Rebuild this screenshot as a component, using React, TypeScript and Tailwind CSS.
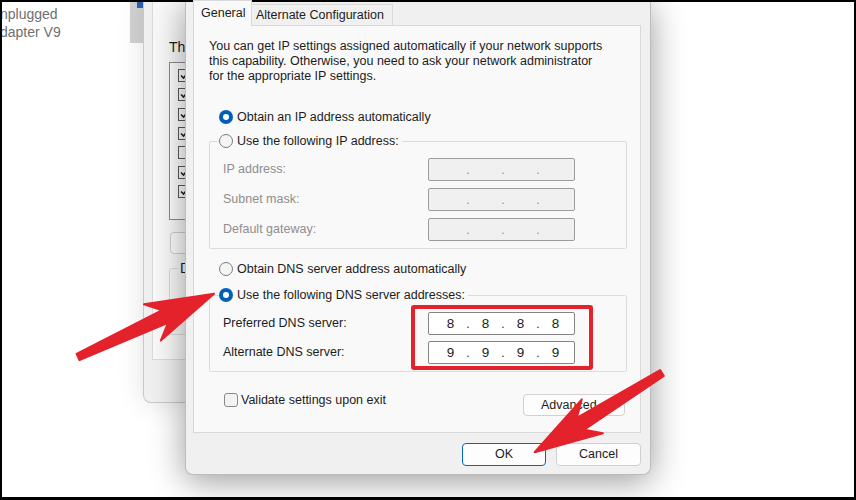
import { Fragment } from "react";

const RED = "#e4222b";

function Radio({ checked }: { checked?: boolean }) {
    if (checked) {
        return (
            <span className="flex h-[14px] w-[14px] shrink-0 items-center justify-center rounded-full bg-[#005fb8]">
                <span className="h-[6px] w-[6px] rounded-full bg-white" />
            </span>
        );
    }
    return <span className="h-[14px] w-[14px] shrink-0 rounded-full border border-[#7c7c7c] bg-[#f5f5f5]" />;
}

function IpBox({ parts, disabled }: { parts?: string[]; disabled?: boolean }) {
    const cells = parts ?? ["", "", "", ""];
    return (
        <div
            className={
                disabled
                    ? "flex h-[23px] w-[147px] items-center rounded-[2px] border border-[#9c9c9c] bg-[#f0f0f0] pl-[8px] text-[#8a8a8a]"
                    : "flex h-[23px] w-[147px] items-center rounded-[2px] border border-[#858585] bg-white pl-[8px] text-[#1c1c1c]"
            }
        >
            {cells.map((p, i) => (
                <Fragment key={i}>
                    <span className="w-[27px] text-center text-[13.5px] leading-[16px]">{p}</span>
                    {i < 3 && <span className="w-[8px] text-center text-[12px] leading-[16px]">.</span>}
                </Fragment>
            ))}
        </div>
    );
}

function Arrow({ x, y, angle, len }: { x: number; y: number; angle: number; len: number }) {
    const d = `M0,-3.5 L${len - 54},-7 L${len - 68},-20 L${len},0 L${len - 68},20 L${len - 54},7 L0,3.5 Z`;
    return (
        <path
            d={d}
            transform={`translate(${x} ${y}) rotate(${angle})`}
            fill={RED}
            stroke={RED}
            strokeWidth={2}
            strokeLinejoin="round"
        />
    );
}

function Check() {
    return (
        <span className="flex h-[13px] w-[13px] items-center justify-center border border-[#5a5a5a] bg-white">
            <svg width="9" height="9" viewBox="0 0 9 9">
                <path d="M1 4.5 L3.5 7 L8 1.5" fill="none" stroke="#222" strokeWidth="1.6" />
            </svg>
        </span>
    );
}

export default function App() {
    const checks = [true, true, true, true, false, true, true];

    return (
        <div className="relative h-[500px] w-[856px] overflow-hidden bg-white font-['Liberation_Sans',Arial,sans-serif] text-[12.5px] text-[#1c1c1c]">
            {/* network connections list behind */}
            <div className="absolute left-0 top-[5px] flex flex-col text-[14px] leading-[18px] text-[#6f6f6f]">
                <span>nplugged</span>
                <span>dapter V9</span>
            </div>
            <div className="absolute left-[130px] top-0 h-[43px] w-[14px] bg-[#d2d2d2]">
                <div className="ml-[7px] h-[8px] w-[6px] bg-[#2a62b8]" />
            </div>

            {/* adapter properties window, mostly hidden behind the dialog */}
            <div className="absolute left-[143px] top-0 flex h-[403px] w-[46px] flex-col overflow-hidden rounded-bl-[8px] border-l border-b border-[#c8c8c8] bg-[#f0f0f0] pl-[8px] shadow-[0_0_28px_rgba(0,0,0,0.12)]">
                <div className="flex h-[360px] w-[220px] flex-col border-x border-b border-[#dadada] bg-[#f9f9f9] pl-[16px] pt-[38px]">
                    <span className="whitespace-nowrap text-[14px] leading-[18px]">Th</span>
                    <div className="mt-[6px] flex h-[158px] w-[180px] flex-col border border-[#8c8c8c] bg-white pl-[8px] pt-[3px]">
                        {checks.map((c, i) => (
                            <div key={i} className="flex h-[19.3px] items-center">
                                {c ? <Check /> : <span className="h-[13px] w-[13px] border border-[#5a5a5a] bg-white" />}
                            </div>
                        ))}
                    </div>
                    <div className="ml-[1px] mt-[12px] h-[22px] w-[100px] rounded-[4px] border border-[#cfcfcf] bg-[#fdfdfd]" />
                    <fieldset className="mt-[7px] h-[74px] w-[180px] rounded-[3px] border border-[#dcdcdc] p-0">
                        <legend className="ml-[8px] px-[2px] text-[14px] leading-[14px]">D</legend>
                    </fieldset>
                </div>
            </div>

            {/* IPv4 properties dialog */}
            <div className="absolute left-[185px] top-0 flex h-[475px] w-[466px] flex-col rounded-b-[8px] border-x border-b border-[#bcbcbc] bg-[#f0f0f0] pl-[7px] pr-[9px] shadow-[0_6px_34px_rgba(0,0,0,0.4)]">
                <div className="relative z-10 flex h-[25px] items-end">
                    <div className="-mb-[1px] h-[26px] w-[59px] border-x border-t border-[#d9d9d9] bg-[#f9f9f9] pl-[7px] pt-[5px] leading-[15px]">
                        General
                    </div>
                    <div className="h-[21px] w-[141px] border-r border-t border-[#d9d9d9] bg-[#f0f0f0] pl-[4px] pt-[3px] leading-[15px]">
                        Alternate Configuration
                    </div>
                </div>

                <div className="flex h-[408px] flex-col border border-[#d9d9d9] bg-[#f9f9f9] pl-[15px] pr-[13px] pt-[13px]">
                    <p className="whitespace-nowrap leading-[15px]">
                        You can get IP settings assigned automatically if your network supports
                        <br />
                        this capability. Otherwise, you need to ask your network administrator
                        <br />
                        for the appropriate IP settings.
                    </p>

                    <div className="mt-[25px] flex h-[16px] items-center gap-[4px] pl-[10px]">
                        <Radio checked />
                        <span>Obtain an IP address automatically</span>
                    </div>

                    <fieldset className="mt-[8px] w-[418px] rounded-[2px] border border-[#dcdcdc] p-0">
                        <legend className="ml-[9px] p-0 pr-[3px]">
                            <span className="flex h-[16px] items-center gap-[4px]">
                                <Radio />
                                <span>Use the following IP address:</span>
                            </span>
                        </legend>
                        <div className="flex flex-col gap-[7px] pb-[7px] pl-[13px] pt-[9px]">
                            {["IP address:", "Subnet mask:", "Default gateway:"].map((l) => (
                                <div key={l} className="flex h-[23px] items-center">
                                    <span className="w-[205px] text-[#8e8e8e]">{l}</span>
                                    <IpBox disabled />
                                </div>
                            ))}
                        </div>
                    </fieldset>

                    <div className="mt-[12px] flex h-[16px] items-center gap-[4px] pl-[10px]">
                        <Radio />
                        <span>Obtain DNS server address automatically</span>
                    </div>

                    <fieldset className="mt-[10px] w-[418px] rounded-[2px] border border-[#dcdcdc] p-0">
                        <legend className="ml-[9px] p-0 pr-[3px]">
                            <span className="flex h-[16px] items-center gap-[4px]">
                                <Radio checked />
                                <span>Use the following DNS server addresses:</span>
                            </span>
                        </legend>
                        <div className="flex flex-col gap-[6px] pb-[7px] pl-[13px] pt-[9px]">
                            <div className="flex h-[23px] items-center">
                                <span className="w-[205px]">Preferred DNS server:</span>
                                <IpBox parts={["8", "8", "8", "8"]} />
                            </div>
                            <div className="flex h-[23px] items-center">
                                <span className="w-[205px]">Alternate DNS server:</span>
                                <IpBox parts={["9", "9", "9", "9"]} />
                            </div>
                        </div>
                    </fieldset>

                    <div className="mt-[21px] flex items-start pl-[15px] pr-[2px]">
                        <span className="h-[14px] w-[14px] rounded-[3px] border border-[#8a8a8a] bg-[#f3f3f3]" />
                        <span className="ml-[3px] leading-[14px]">Validate settings upon exit</span>
                        <div className="ml-auto mt-[1px] flex h-[22px] w-[102px] items-center justify-center rounded-[4px] border border-[#d1d1d1] bg-[#fdfdfd]">
                            Advanced...
                        </div>
                    </div>
                </div>

                <div className="flex justify-end gap-[10px] pt-[10px]">
                    <div className="flex h-[23px] w-[84px] items-center justify-center rounded-[4px] border border-[#0067c0] bg-[#fdfdfd]">
                        OK
                    </div>
                    <div className="flex h-[23px] w-[85px] items-center justify-center rounded-[4px] border border-[#d0d0d0] bg-[#fdfdfd]">
                        Cancel
                    </div>
                </div>
            </div>

            {/* annotations */}
            <div className="absolute left-[411px] top-[305px] h-[65px] w-[182px] rounded-[3px] border-[4px] border-[#e4222b]" />
            <svg className="pointer-events-none absolute left-0 top-0" width="856" height="500">
                <Arrow x={78} y={357} angle={-24.9} len={150} />
                <Arrow x={662} y={373} angle={148.1} len={150} />
            </svg>

            <div className="pointer-events-none absolute inset-0 border-b-[3px] border-l-[2px] border-r-[2px] border-t-[2px] border-black" />
        </div>
    );
}
